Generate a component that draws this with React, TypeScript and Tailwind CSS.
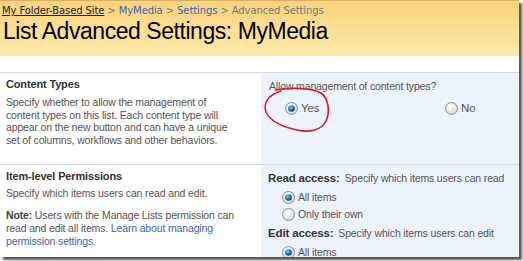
import React from "react";

const Radio: React.FC<{ checked?: boolean }> = ({ checked }) => (
  <svg width="13" height="13" viewBox="0 0 13 13" className="shrink-0">
    <defs>
      <radialGradient id={checked ? "rgOn" : "rgOff"} cx="40%" cy="35%" r="70%">
        <stop offset="0%" stopColor="#ffffff" />
        <stop offset="100%" stopColor="#d4d4d4" />
      </radialGradient>
      <radialGradient id="dot" cx="40%" cy="35%" r="65%">
        <stop offset="0%" stopColor="#7fd0ff" />
        <stop offset="60%" stopColor="#1a73b8" />
        <stop offset="100%" stopColor="#0b3f6e" />
      </radialGradient>
    </defs>
    <circle cx="6.5" cy="6.5" r="6" fill={checked ? "url(#rgOn)" : "url(#rgOff)"} stroke="#8f8f8f" strokeWidth="1" />
    {checked && <circle cx="6.5" cy="6.5" r="3.3" fill="url(#dot)" />}
  </svg>
);

export default function App() {
  const body = { fontFamily: '"Liberation Sans", Arial, sans-serif' };
  return (
    <div className="w-[523px] h-[261px] bg-white overflow-hidden" style={body}>
      <div className="relative w-[519px] h-[257px] bg-white shadow-[3px_3px_2px_rgba(0,0,0,0.65)] overflow-hidden">
        {/* header */}
        <div className="h-[56px] bg-gradient-to-b from-[#f9d27c] to-[#ffe9a9] border-t border-[#d9b160] pl-[2px]">
          <div className="text-[10px] leading-[14px] pt-[3px] text-[#777] tracking-[-0.1px]" style={{ fontFamily: '"DejaVu Sans", Verdana, sans-serif' }}>
            <span className="text-[#222] underline">My Folder-Based Site</span>
            <span> &gt; </span>
            <span className="text-[#3b64b5]">MyMedia</span>
            <span> &gt; </span>
            <span className="text-[#3b64b5]">Settings</span>
            <span> &gt; </span>
            <span>Advanced Settings</span>
          </div>
          <div className="text-[23px] leading-[26px] text-black pl-[1px] tracking-[-0.45px]">
            List Advanced Settings: MyMedia
          </div>
        </div>
        <div className="h-[16px]" />

        {/* row 1 */}
        <div className="flex border-t border-[#d8d8d8] h-[92px] text-[10.5px] tracking-[-0.15px]">
          <div className="w-[261px] pl-[6px] pt-[4px]">
            <div className="font-bold text-[#333] leading-[14px] text-[11px]">Content Types</div>
            <div className="text-[#555] leading-[12.7px] mt-[5px] whitespace-nowrap">
              Specify whether to allow the management of<br />
              content types on this list. Each content type will<br />
              appear on the new button and can have a unique<br />
              set of columns, workflows and other behaviors.
            </div>
          </div>
          <div className="flex-1 bg-[#edf3fd] pl-[8px] pt-[6px] text-[#555]">
            <div className="leading-[14px]">Allow management of content types?</div>
            <div className="flex mt-[8px] leading-[14px]">
              <div className="flex items-center gap-[3px] pl-[16px] w-[176px]">
                <Radio checked />
                <span className="text-[11.5px]">Yes</span>
              </div>
              <div className="flex items-center gap-[3px]">
                <Radio />
                <span className="text-[11.5px]">No</span>
              </div>
            </div>
          </div>
        </div>

        {/* row 2 */}
        <div className="flex border-t border-[#d8d8d8] h-[100px] text-[10.5px] tracking-[-0.15px]">
          <div className="w-[261px] pl-[6px] pt-[4px]">
            <div className="font-bold text-[#333] leading-[14px] text-[11px]">Item-level Permissions</div>
            <div className="text-[#555] leading-[13px] mt-[4px]">Specify which items users can read and edit.</div>
            <div className="text-[#555] leading-[13px] mt-[9px] whitespace-nowrap">
              <span className="font-bold text-[#444]">Note:</span> Users with the Manage Lists permission can<br />
              read and edit all items. <span className="text-[#3b64b5]">Learn about managing<br />
              permission settings.</span>
            </div>
          </div>
          <div className="flex-1 bg-[#edf3fd] pl-[7px] pt-[6px] text-[#555]">
            <div className="leading-[14px] whitespace-nowrap">
              <span className="font-bold text-[#333] text-[11.5px]">Read access:</span>
              <span className="ml-[5px]">Specify which items users can read</span>
            </div>
            <div className="flex items-center gap-[3px] pl-[14px] mt-[5px] leading-[14px]">
              <Radio checked />
              <span>All items</span>
            </div>
            <div className="flex items-center gap-[3px] pl-[14px] mt-[3px] leading-[14px]">
              <Radio />
              <span>Only their own</span>
            </div>
            <div className="leading-[14px] mt-[5px] whitespace-nowrap">
              <span className="font-bold text-[#333] text-[11.5px]">Edit access:</span>
              <span className="ml-[5px]">Specify which items users can edit</span>
            </div>
            <div className="flex items-center gap-[3px] pl-[14px] mt-[5px] leading-[14px]">
              <Radio checked />
              <span>All items</span>
            </div>
          </div>
        </div>

        {/* red hand-drawn circle */}
        <svg className="absolute left-0 top-0 pointer-events-none" width="519" height="257">
          <path
            d="M276 90 C290 87 312 88 321 93 C329 99 330 112 326 121 C322 130 309 133 297 130 C283 127 270 121 266 112 C263 103 268 95 281 91"
            fill="none"
            stroke="#e8141b"
            strokeWidth="1.6"
            strokeLinecap="round"
          />
        </svg>
      </div>
    </div>
  );
}
